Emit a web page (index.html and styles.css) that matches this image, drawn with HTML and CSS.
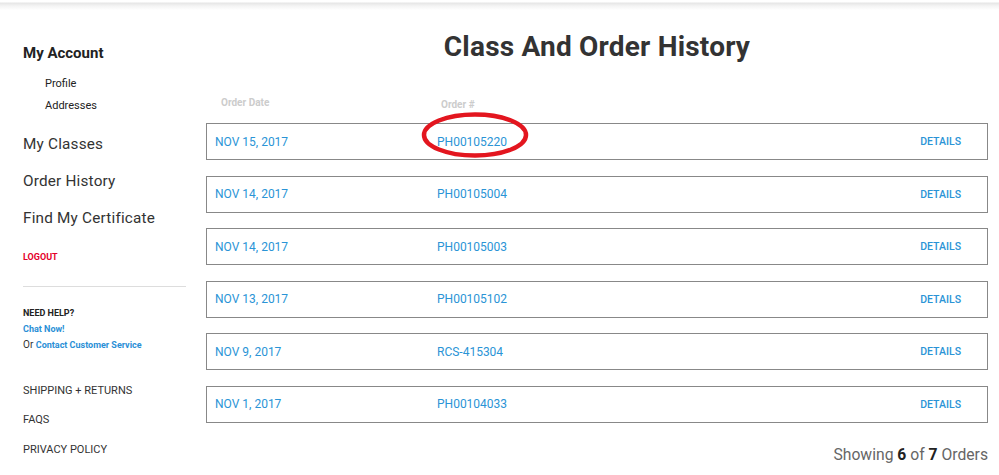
FILE: index.html
```html
<!DOCTYPE html>
<html lang="en">

<head>
    <meta charset="utf-8">
    <meta name="viewport" content="width=device-width, initial-scale=1.0">
    <title>Class And Order History</title>
    <link rel="stylesheet" href="styles.css">
</head>

<body>

    <div class="topbar"></div>

    <div class="page">
        <aside class="sidebar">
            <h2 class="konto">My Account</h2>
            <ul class="underliste">
                <li><a>Profile</a></li>
                <li><a>Addresses</a></li>
            </ul>
            <ul class="hovedliste">
                <li><a>My Classes</a></li>
                <li><a>Order History</a></li>
                <li><a>Find My Certificate</a></li>
            </ul>
            <a class="logout">LOGOUT</a>
            <hr>
            <div class="hjaelp">
                <h4>NEED HELP?</h4>
                <p><a class="blaa">Chat Now!</a></p>
                <p>Or <a class="blaa">Contact Customer Service</a></p>
            </div>
            <ul class="bundliste">
                <li><a>SHIPPING + RETURNS</a></li>
                <li><a>FAQS</a></li>
                <li><a>PRIVACY POLICY</a></li>
            </ul>
        </aside>

        <main>
            <h1>Class And Order History</h1>

            <div class="kolonner">
                <span class="kol_dato">Order Date</span>
                <span class="kol_nr">Order #</span>
            </div>

            <section class="ordrer">
                <article class="ordre">
                    <span class="dato">NOV 15, 2017</span>
                    <span class="nr markeret">PH00105220
                        <svg class="ring" width="110" height="48" viewBox="0 0 110 48">
                            <ellipse cx="55" cy="24" rx="51" ry="20.5" fill="none" stroke="#e3161f" stroke-width="4.5"/>
                        </svg>
                    </span>
                    <a class="detaljer">DETAILS</a>
                </article>
                <article class="ordre">
                    <span class="dato">NOV 14, 2017</span>
                    <span class="nr">PH00105004</span>
                    <a class="detaljer">DETAILS</a>
                </article>
                <article class="ordre">
                    <span class="dato">NOV 14, 2017</span>
                    <span class="nr">PH00105003</span>
                    <a class="detaljer">DETAILS</a>
                </article>
                <article class="ordre">
                    <span class="dato">NOV 13, 2017</span>
                    <span class="nr">PH00105102</span>
                    <a class="detaljer">DETAILS</a>
                </article>
                <article class="ordre">
                    <span class="dato">NOV 9, 2017</span>
                    <span class="nr">RCS-415304</span>
                    <a class="detaljer">DETAILS</a>
                </article>
                <article class="ordre">
                    <span class="dato">NOV 1, 2017</span>
                    <span class="nr">PH00104033</span>
                    <a class="detaljer">DETAILS</a>
                </article>
            </section>

            <p class="antal">Showing <b>6</b> of <b>7</b> Orders</p>
        </main>
    </div>

</body></html>
```

FILE: styles.css
```css
* {
    margin: 0;
    padding: 0;
    box-sizing: border-box;
}

body {
    font-family: Roboto, 'Liberation Sans', sans-serif;
    background-color: #fff;
    color: #222;
    overflow: hidden;
}

a {
    text-decoration: none;
    color: inherit;
}

ul {
    list-style: none;
}

.topbar {
    height: 10px;
    background: linear-gradient(#fff 0, #fff 2px, #e6e6e6 3px, #f4f4f4 6px, #fff 10px);
}

.page {
    display: flex;
    padding-right: 11px;
}

/* venstre menu */

.sidebar {
    width: 186px;
    flex-shrink: 0;
    padding-left: 23px;
    padding-top: 33px;
}

.konto {
    font-size: 15px;
    font-weight: bold;
    line-height: 20px;
    color: #222;
}

.underliste {
    margin-top: 10px;
    padding-left: 22px;
}

.underliste li {
    font-size: 11px;
    line-height: 22px;
    color: #222;
}

.hovedliste {
    margin-top: 8.5px;
}

.hovedliste li {
    font-size: 15.3px;
    line-height: 37px;
    color: #333;
    letter-spacing: 0.2px;
}

.logout {
    display: block;
    margin-top: 10.5px;
    font-size: 9px;
    font-weight: bold;
    line-height: 20px;
    color: #e4002b;
}

hr {
    border: none;
    border-top: 1px solid #ddd;
    margin-top: 19px;
}

.hjaelp {
    margin-top: 18px;
}

.hjaelp h4 {
    font-size: 9px;
    font-weight: bold;
    line-height: 16px;
    color: #222;
}

.hjaelp p {
    font-size: 10px;
    line-height: 15px;
    color: #333;
}

.blaa {
    font-size: 9px;
    font-weight: bold;
    color: #2a8fd6;
}

.bundliste {
    margin-top: 22.5px;
}

.bundliste li {
    font-size: 11px;
    line-height: 29.5px;
    color: #333;
}

/* ordreliste */

main {
    flex: 1;
    padding-left: 20px;
}

h1 {
    font-size: 28px;
    font-weight: bold;
    text-align: center;
    line-height: 30px;
    margin-top: 22px;
    color: #333;
    letter-spacing: 0.2px;
}

.kolonner {
    display: grid;
    grid-template-columns: 220px 1fr;
    padding-left: 15px;
    margin-top: 26px;
    font-size: 10px;
    font-weight: bold;
    color: #ccc;
    height: 35px;
}

.kol_dato {
    line-height: 30px;
}

.kol_nr {
    line-height: 34px;
}

.ordrer {
    display: flex;
    flex-direction: column;
    gap: 15.6px;
}

.ordre {
    display: grid;
    grid-template-columns: 222px 1fr auto;
    align-items: center;
    height: 37px;
    border: 1px solid #888;
    padding: 0 26px 0 8px;
    font-size: 12px;
    color: #2a94d6;
}

.markeret {
    position: relative;
}

.ring {
    position: absolute;
    left: -17px;
    top: -24px;
}

.detaljer {
    font-size: 10.5px;
    font-weight: 500;
}

.antal {
    text-align: right;
    font-size: 15.7px;
    color: #666;
    margin-top: 22px;
}

.antal b {
    color: #222;
}
```
